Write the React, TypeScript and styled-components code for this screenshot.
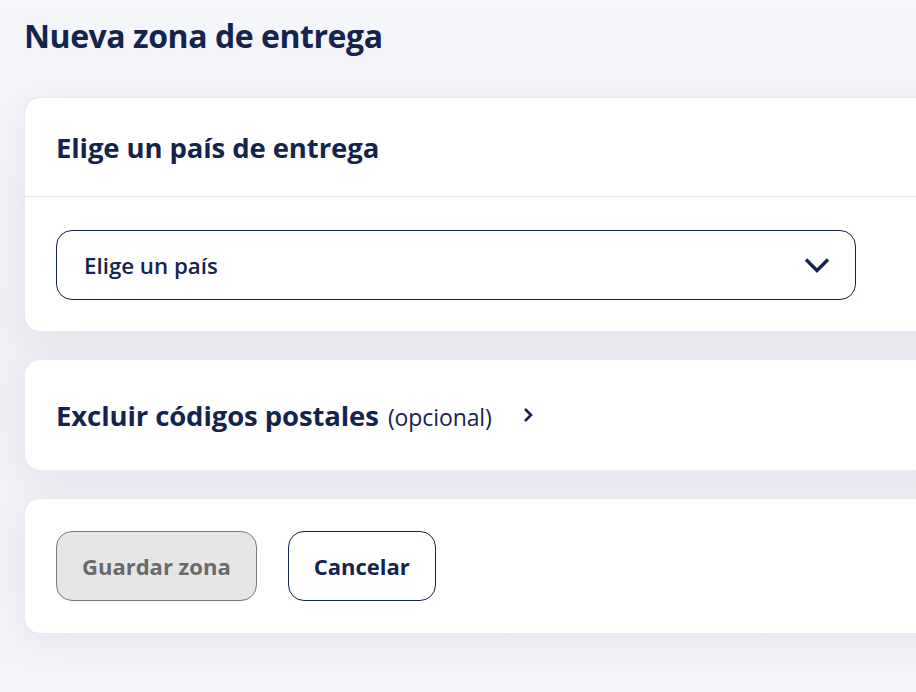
import React from "react";
import styled, { createGlobalStyle } from "styled-components";

const Global = createGlobalStyle`
  html, body { margin: 0; padding: 0; }
  body {
    background: linear-gradient(180deg, #f5f6fa 0%, #eff0f5 50%, #f3f4f8 100%);
    font-family: "Open Sans", "Liberation Sans", sans-serif;
    color: #14244f;
    overflow: hidden;
    width: 916px;
    height: 692px;
  }
`;

const Page = styled.div`
  width: 960px;
  padding: 14px 0 0 24px;
  display: flex;
  flex-direction: column;
`;

const Title = styled.h1`
  margin: 0 0 39px;
  font-size: 32px;
  line-height: 44px;
  font-weight: 700;
  letter-spacing: -0.45px;
`;

const Stack = styled.div`
  display: flex;
  flex-direction: column;
  gap: 27px;
`;

const Card = styled.section`
  background: #fff;
  border: 1px solid #e9eaef;
  border-radius: 16px;
  box-shadow: 0 8px 40px rgba(30, 40, 90, 0.06);
`;

const CardHeader = styled.div`
  padding: 0 31px;
  height: 98px;
  display: flex;
  align-items: center;
  border-bottom: 1px solid #e4e4e6;
`;

const CardTitle = styled.h2`
  margin: 0;
  font-size: 27.5px;
  font-weight: 700;
  letter-spacing: -0.1px;
`;

const CardBody = styled.div`
  padding: 33px 31px 31px;
`;

const Select = styled.button`
  width: 800px;
  height: 70px;
  box-sizing: border-box;
  border: 1px solid #14244f;
  border-radius: 16px;
  background: #fff;
  display: flex;
  align-items: center;
  justify-content: space-between;
  padding: 0 25px 0 27px;
  font-family: inherit;
  font-size: 22.3px;
  font-weight: 600;
  color: #14244f;
`;

const Collapsible = styled.div`
  height: 110px;
  padding: 0 31px;
  display: flex;
  align-items: center;
  gap: 30px;
`;

const Muted = styled.span`
  margin-left: 2px;
  font-size: 23px;
  font-weight: 400;
  letter-spacing: -0.1px;
`;

const Actions = styled.div`
  padding: 32px 31px;
  display: flex;
  gap: 31px;
`;

const Button = styled.button<{ $variant: "disabled" | "outline" }>`
  height: 70px;
  box-sizing: border-box;
  padding: 0 25px;
  border-radius: 16px;
  font-family: inherit;
  font-size: 22px;
  font-weight: 700;
  border: 1px solid ${(p) => (p.$variant === "disabled" ? "#7a7a7a" : "#14244f")};
  background: ${(p) => (p.$variant === "disabled" ? "#e6e6e6" : "#fff")};
  color: ${(p) => (p.$variant === "disabled" ? "#6a6a6a" : "#14244f")};
`;

const ChevronDown = () => (
  <svg width="26" height="18" viewBox="0 0 26 18" fill="none">
    <path d="M2 3.5l11 11 11-11" stroke="#14244f" strokeWidth="3.4" />
  </svg>
);

const ChevronRight = () => (
  <svg width="12" height="18" viewBox="0 0 12 18" fill="none">
    <path d="M3 3l6 6-6 6" stroke="#14244f" strokeWidth="2.6" />
  </svg>
);

export default function App() {
  return (
    <>
      <Global />
      <Page>
        <Title>Nueva zona de entrega</Title>
        <Stack>
          <Card>
            <CardHeader>
              <CardTitle>Elige un país de entrega</CardTitle>
            </CardHeader>
            <CardBody>
              <Select>
                Elige un país
                <ChevronDown />
              </Select>
            </CardBody>
          </Card>
          <Card>
            <Collapsible>
              <CardTitle>
                Excluir códigos postales <Muted>(opcional)</Muted>
              </CardTitle>
              <ChevronRight />
            </Collapsible>
          </Card>
          <Card>
            <Actions>
              <Button $variant="disabled">Guardar zona</Button>
              <Button $variant="outline">Cancelar</Button>
            </Actions>
          </Card>
        </Stack>
      </Page>
    </>
  );
}
